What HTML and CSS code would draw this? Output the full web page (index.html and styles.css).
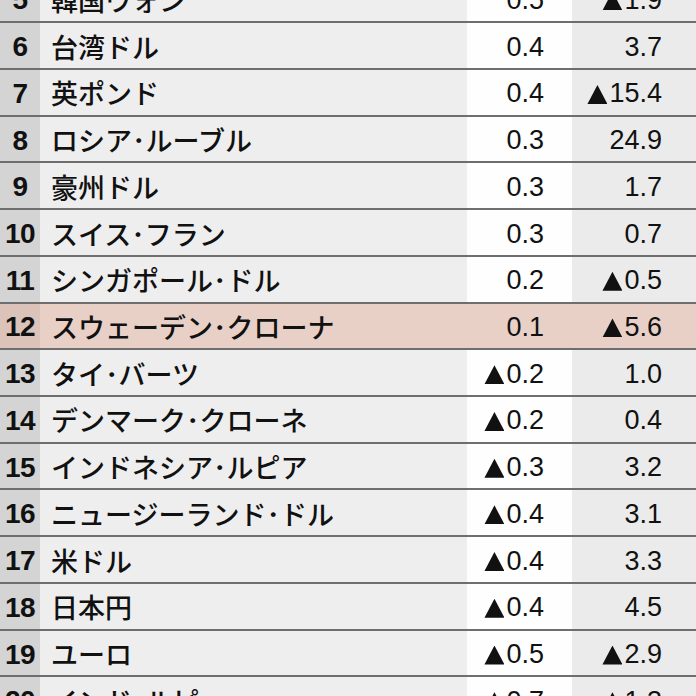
FILE: index.html
```html
<!DOCTYPE html>
<html lang="ja">
<head>
<meta charset="utf-8">
<link rel="stylesheet" href="styles.css">
</head>
<body>
<div class="table">
  <div class="row"><div class="rank">5</div><div class="name">韓国ウォン</div><div class="val">0.5</div><div class="chg"><span class="tri"></span>1.9</div></div>
  <div class="row"><div class="rank">6</div><div class="name">台湾ドル</div><div class="val">0.4</div><div class="chg">3.7</div></div>
  <div class="row"><div class="rank">7</div><div class="name">英ポンド</div><div class="val">0.4</div><div class="chg"><span class="tri"></span>15.4</div></div>
  <div class="row"><div class="rank">8</div><div class="name">ロシア<span class="dot">･</span>ルーブル</div><div class="val">0.3</div><div class="chg">24.9</div></div>
  <div class="row"><div class="rank">9</div><div class="name">豪州ドル</div><div class="val">0.3</div><div class="chg">1.7</div></div>
  <div class="row"><div class="rank">10</div><div class="name">スイス<span class="dot">･</span>フラン</div><div class="val">0.3</div><div class="chg">0.7</div></div>
  <div class="row"><div class="rank">11</div><div class="name">シンガポール<span class="dot">･</span>ドル</div><div class="val">0.2</div><div class="chg"><span class="tri"></span>0.5</div></div>
  <div class="row hl"><div class="rank">12</div><div class="name">スウェーデン<span class="dot">･</span>クローナ</div><div class="val">0.1</div><div class="chg"><span class="tri"></span>5.6</div></div>
  <div class="row"><div class="rank">13</div><div class="name">タイ<span class="dot">･</span>バーツ</div><div class="val"><span class="tri"></span>0.2</div><div class="chg">1.0</div></div>
  <div class="row"><div class="rank">14</div><div class="name">デンマーク<span class="dot">･</span>クローネ</div><div class="val"><span class="tri"></span>0.2</div><div class="chg">0.4</div></div>
  <div class="row"><div class="rank">15</div><div class="name">インドネシア<span class="dot">･</span>ルピア</div><div class="val"><span class="tri"></span>0.3</div><div class="chg">3.2</div></div>
  <div class="row"><div class="rank">16</div><div class="name">ニュージーランド<span class="dot">･</span>ドル</div><div class="val"><span class="tri"></span>0.4</div><div class="chg">3.1</div></div>
  <div class="row"><div class="rank">17</div><div class="name">米ドル</div><div class="val"><span class="tri"></span>0.4</div><div class="chg">3.3</div></div>
  <div class="row"><div class="rank">18</div><div class="name">日本円</div><div class="val"><span class="tri"></span>0.4</div><div class="chg">4.5</div></div>
  <div class="row"><div class="rank">19</div><div class="name">ユーロ</div><div class="val"><span class="tri"></span>0.5</div><div class="chg"><span class="tri"></span>2.9</div></div>
  <div class="row"><div class="rank">20</div><div class="name">インド<span class="dot">･</span>ルピー</div><div class="val"><span class="tri"></span>0.7</div><div class="chg"><span class="tri"></span>1.3</div></div>
</div>
</body>
</html>
```
FILE: styles.css
```css
html, body {
  margin: 0;
  padding: 0;
  background: #ececec;
}
body {
  width: 696px;
  height: 696px;
  overflow: hidden;
  color: #111;
}
.table {
  margin-top: -23.43px;
}
.row {
  display: grid;
  grid-template-columns: 40px 427px 105px 124px;
  height: 46.73px;
  box-sizing: border-box;
  border-bottom: 2px solid #6e6e6e;
}
.row > div {
  display: flex;
  align-items: center;
}
.rank {
  justify-content: center;
  background: #d4d4d4;
  font-family: "Liberation Sans", Arial, sans-serif;
  font-weight: bold;
  font-size: 28px;
  letter-spacing: -0.5px;
  padding-top: 3px;
}
.name {
  background: #eeeeee;
  font-family: "Noto Sans CJK JP", sans-serif;
  font-weight: 500;
  font-size: 27px;
  padding-left: 11px;
  padding-top: 1px;
}
.val, .chg {
  justify-content: flex-end;
  font-family: "Liberation Sans", Arial, sans-serif;
  font-size: 27px;
  padding-top: 3px;
}
.val {
  background: #fefefe;
  padding-right: 28px;
}
.chg {
  background: #ebebeb;
  padding-right: 34px;
}
.row.hl .rank { background: #dcc3ba; }
.row.hl .name,
.row.hl .val,
.row.hl .chg { background: #e8d0c7; }
.tri {
  display: inline-block;
  width: 20px;
  height: 19px;
  margin-right: 2px;
  margin-top: 1px;
  background: #111;
  clip-path: polygon(50% 0, 100% 100%, 0 100%);
}
```
